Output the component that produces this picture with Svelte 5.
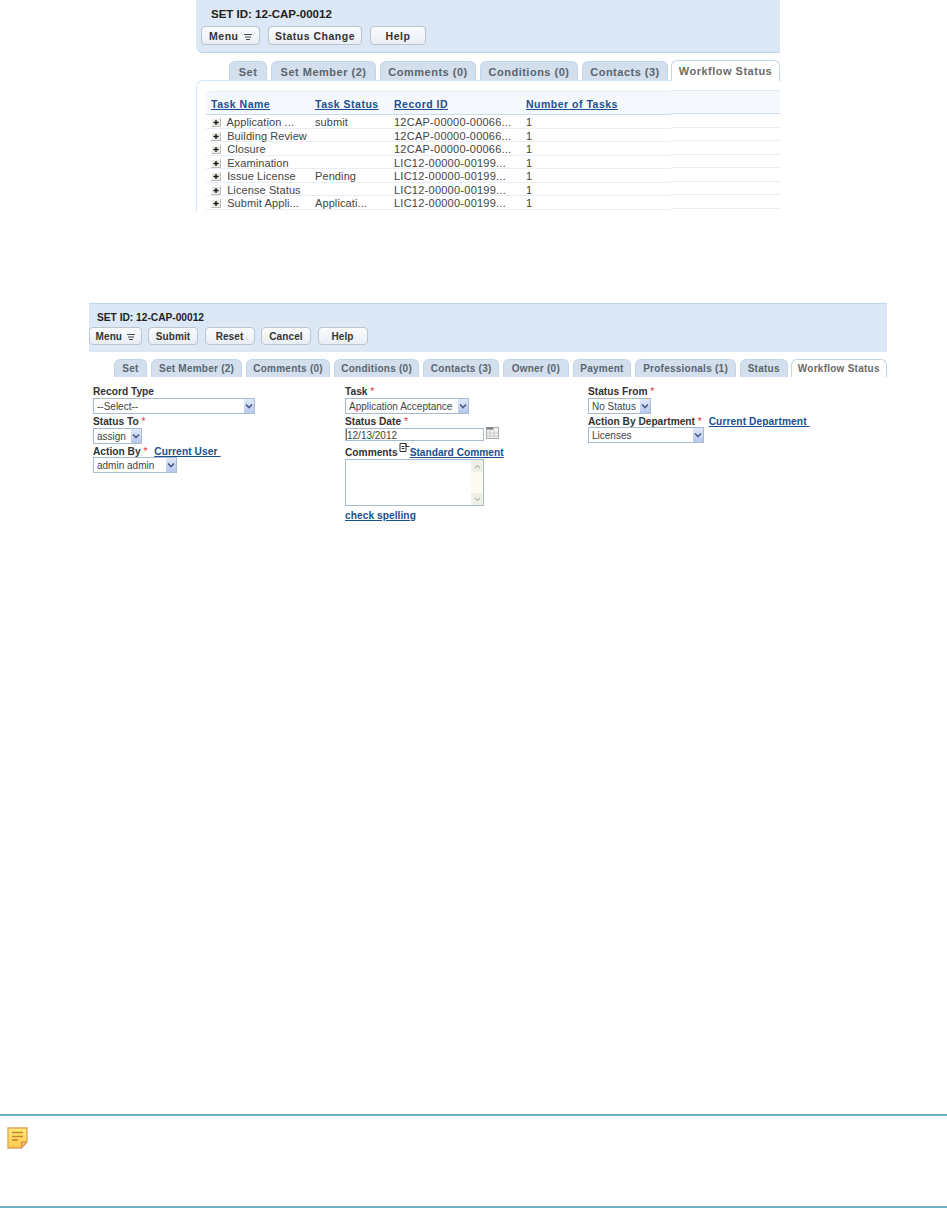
<script>
  const topTabs = [['Set', 38], ['Set Member (2)', 105], ['Comments (0)', 96], ['Conditions (0)', 98], ['Contacts (3)', 86]];
  const formTabs = [['Set', 33], ['Set Member (2)', 92], ['Comments (0)', 84], ['Conditions (0)', 86], ['Contacts (3)', 76], ['Owner (0)', 66], ['Payment', 59], ['Professionals (1)', 101], ['Status', 48]];

  const tasks = [
    { name: 'Application ...', status: 'submit', record: '12CAP-00000-00066...' },
    { name: 'Building Review', status: '', record: '12CAP-00000-00066...' },
    { name: 'Closure', status: '', record: '12CAP-00000-00066...' },
    { name: 'Examination', status: '', record: 'LIC12-00000-00199...' },
    { name: 'Issue License', status: 'Pending', record: 'LIC12-00000-00199...' },
    { name: 'License Status', status: '', record: 'LIC12-00000-00199...' },
    { name: 'Submit Appli...', status: 'Applicati...', record: 'LIC12-00000-00199...' }
  ];
</script>

{#snippet arrow()}
  <span class="arrow">
    <svg width="8" height="6" viewBox="0 0 8 6"><path d="M1 1.5 L4 4.5 L7 1.5" fill="none" stroke="#4a5a85" stroke-width="1.6" /></svg>
  </span>
{/snippet}

{#snippet menuLines()}
  <svg class="lines" width="8" height="6" viewBox="0 0 8 6"><path d="M0 .5h8M1 3h6M2 5.5h4" stroke="#444" /></svg>
{/snippet}

<div class="page">
  <section class="top">
    <div class="head">
      <div class="set-id">SET ID: 12-CAP-00012</div>
      <div class="btns">
        <button class="btn menu">Menu {@render menuLines()}</button>
        <button class="btn change">Status Change</button>
        <button class="btn help">Help</button>
      </div>
    </div>

    <div class="tabs top-tabs">
      {#each topTabs as [label, w]}
        <span class="tab" style="width:{w}px">{label}</span>
      {/each}
      <span class="tab on" style="width:109px">Workflow Status</span>
    </div>

    <div class="panel">
      <div class="tbl">
        <div class="grid-head">
          <a href="#a" class="c1">Task Name</a>
          <a href="#a" class="c2">Task Status</a>
          <a href="#a" class="c3">Record ID</a>
          <a href="#a" class="c4">Number of Tasks</a>
        </div>
        {#each tasks as task}
          <div class="row">
            <span class="c1">
              <span class="plus"><svg width="10" height="9" viewBox="0 0 10 9"><path d="M5 2v5M2.5 4.5h5" stroke="#111" stroke-width="1.3" /></svg></span>
              {task.name}
            </span>
            <span class="c2">{task.status}</span>
            <span class="c3">{task.record}</span>
            <span class="c4">1</span>
          </div>
        {/each}
      </div>
      <div class="filler">
        <div class="grid-head"></div>
        {#each tasks as task}
          <div class="row"></div>
        {/each}
      </div>
    </div>
  </section>

  <section class="form-shot">
    <div class="head form-head">
      <div class="set-id">SET ID: 12-CAP-00012</div>
      <div class="btns">
        <button class="btn menu">Menu {@render menuLines()}</button>
        <button class="btn b-sub">Submit</button>
        <button class="btn b-sub">Reset</button>
        <button class="btn b-sub">Cancel</button>
        <button class="btn b-sub">Help</button>
      </div>
    </div>

    <div class="tabs form-tabs">
      {#each formTabs as [label, w]}
        <span class="tab" style="width:{w}px">{label}</span>
      {/each}
      <span class="tab on" style="width:97px">Workflow Status</span>
    </div>

    <div class="form">
      <div class="col col1">
        <label for="x">Record Type</label>
        <div class="select" style="width:162px"><span>--Select--</span>{@render arrow()}</div>
        <label for="x">Status To <i>*</i></label>
        <div class="select" style="width:49px"><span>assign</span>{@render arrow()}</div>
        <label class="tight" for="x">Action By <i>*</i> <a href="#a" class="lnk">Current User&nbsp;</a></label>
        <div class="select" style="width:84px"><span>admin admin</span>{@render arrow()}</div>
      </div>
      <div class="col col2">
        <label for="x">Task <i>*</i></label>
        <div class="select" style="width:124px"><span>Application Acceptance</span>{@render arrow()}</div>
        <label for="x">Status Date <i>*</i></label>
        <div class="date-line">
          <div class="input">12/13/2012</div>
          <svg class="cal" width="13" height="12" viewBox="0 0 13 12"><rect x=".5" y=".5" width="12" height="11" fill="#f1f1f1" stroke="#aaa" /><rect x=".5" y=".5" width="7" height="2" fill="#777" /><path d="M1 6h11M1 9h11M4 3v8M8 3v8" stroke="#ccc" /></svg>
        </div>
        <div class="comment-label">
          <label for="x">Comments</label>
          <svg class="doc" width="11" height="11" viewBox="0 0 11 11"><path d="M1 .5h6v3h3.5M7 .5v8M1 .5v8h6" fill="none" stroke="#333" /><path d="M2.5 3.5h3M2.5 5.5h3" stroke="#333" /></svg>
          <a href="#a" class="lnk std">Standard Comment</a>
        </div>
        <div class="textarea">
          <div class="scroll">
            <span class="sb">
              <svg width="7" height="5" viewBox="0 0 7 5"><path d="M1 4 L3.5 1.5 L6 4" fill="none" stroke="#bbb" stroke-width="1.2" /></svg>
            </span>
            <span class="sb">
              <svg width="7" height="5" viewBox="0 0 7 5"><path d="M1 1 L3.5 3.5 L6 1" fill="none" stroke="#bbb" stroke-width="1.2" /></svg>
            </span>
          </div>
        </div>
        <a href="#a" class="lnk spell">check spelling</a>
      </div>
      <div class="col col3">
        <label for="x">Status From <i>*</i></label>
        <div class="select" style="width:63px"><span>No Status</span>{@render arrow()}</div>
        <label class="tight" for="x">Action By Department <i>*</i> <a href="#a" class="lnk dept">Current Department&nbsp;</a></label>
        <div class="select" style="width:116px"><span>Licenses</span>{@render arrow()}</div>
      </div>
    </div>
  </section>

  <section class="note">
    <svg width="21" height="22" viewBox="0 0 21 22">
      <defs>
        <linearGradient id="noteFill" x1="0" y1="0" x2="0" y2="1">
          <stop offset="0" stop-color="#ffee70" />
          <stop offset="1" stop-color="#ffc84e" />
        </linearGradient>
      </defs>
      <path d="M1 1h19v14l-5.5 6H1z" fill="url(#noteFill)" stroke="#e0a465" stroke-width="1.4" />
      <path d="M14.5 20.5v-5.5h5z" fill="#f4c27c" stroke="#cf8b45" />
      <path d="M5 5.5h11M5 9.5h11" stroke="#c98233" stroke-width="1.6" />
      <path d="M5 13h6" stroke="#bd5f22" stroke-width="1.2" />
    </svg>
  </section>
</div>

<style>
  :global(body) { margin: 0; background: #fff; }
  .page {
    width: 947px; height: 1208px; overflow: hidden;
    font-family: "Liberation Sans", Arial, sans-serif; font-size: 10.5px; color: #222;
  }

  .top { margin-left: 196px; width: 584px; }
  .head {
    height: 53px; box-sizing: border-box; background: #dce8f5;
    border-bottom: 1px solid #c2d6ea; border-bottom-left-radius: 7px;
    padding: 7px 0 0 15px;
  }
  .set-id { font-size: 11.5px; font-weight: bold; line-height: 14px; color: #222; }
  .btns { display: flex; gap: 8px; margin: 5px 0 0 -10px; }
  .btn {
    height: 19px; padding: 0; box-sizing: border-box; background: linear-gradient(#fafcfe, #e8eef5);
    border: 1px solid #bcc4cc; border-radius: 4px;
    font: bold 10.5px "Liberation Sans", Arial, sans-serif; letter-spacing: .5px; color: #333;
  }
  .btn.menu { width: 59px; }
  .btn.change { width: 94px; }
  .btn.help { width: 56px; }
  .btn.b-sub { width: 50px; }
  .lines { margin-left: 2px; }

  .tabs { display: flex; gap: 4px; }
  .tab {
    height: 19px; box-sizing: border-box; text-align: center; line-height: 20px;
    background: #d3dfec; border: 1px solid #c2d6ea; border-bottom: 0;
    border-radius: 6px 6px 0 0; white-space: nowrap;
    font-size: 11px; font-weight: bold; letter-spacing: .5px; color: #5a6570;
  }
  .tab.on { background: #fff; height: 21px; margin: -1px 0 -1px -1px; color: #6b6b6b; position: relative; }
  .top-tabs { margin: 8px 0 0 33px; }

  .panel {
    display: flex; height: 132px; box-sizing: border-box;
    padding: 10px 0 0 9px;
    border-top: 1px solid #d5e6f5; border-left: 1px solid #d5e6f5; border-top-left-radius: 7px;
  }
  .tbl { width: 465px; }
  .filler { flex: 1; margin-top: -1px; }
  .grid-head, .row { display: flex; }
  .grid-head {
    height: 24px; align-items: center; box-sizing: border-box; padding-top: 2px;
    background: #f5f9fd; border-top: 1px solid #e1ecf6; border-bottom: 1px solid #c9dcee;
  }
  .tbl .grid-head { border-top-left-radius: 6px; }
  .grid-head a {
    font-weight: bold; color: #1b4f8f; text-decoration: underline; letter-spacing: .5px; font-size: 10.5px;
  }
  .row { height: 13.5px; line-height: 14px; box-sizing: border-box; border-bottom: 1px solid #e8eef4; color: #444; font-size: 11px; letter-spacing: .1px; }
  .c1 { width: 104px; padding-left: 5px; white-space: nowrap; display: block; }
  .c2 { width: 79px; }
  .c3 { width: 132px; }
  .row .c3 { letter-spacing: .25px; }
  .c4 { flex: 1; }
  .plus {
    display: inline-block; width: 10px; height: 9px; margin-right: 3px; vertical-align: -1px;
    background: #eceae2; box-shadow: inset -1px -1px #bbb, inset 1px 1px #fff;
  }
  .plus svg { display: block; }

  .form-shot { margin: 91px 0 0 89px; width: 798px; height: 228px; }
  .form-head { height: 49px; padding: 7px 0 0 8px; border-bottom: 0; border-top: 1px solid #c2d6ea; border-radius: 0; }
  .form-head .set-id { font-size: 10.2px; }
  .form-head .btns { gap: 6.5px; margin: 2px 0 0 -8px; }
  .form-head .btn { height: 18px; font-size: 10px; letter-spacing: .1px; }
  .form-head .btn.menu { width: 52.5px; }
  .form-tabs { margin: 7px 0 0 25px; gap: 4px; }
  .form-tabs .tab { height: 18px; line-height: 18px; font-size: 10px; letter-spacing: .25px; }
  .form-tabs .tab.on { height: 18px; margin: 0 0 0 -1px; }

  .form { display: flex; padding: 7px 0 0 4px; }
  .col { display: flex; flex-direction: column; align-items: flex-start; }
  .col1 { width: 252px; }
  .col2 { width: 243px; }
  label { display: block; height: 14px; font-size: 10.2px; font-weight: bold; line-height: 16px; color: #333; white-space: nowrap; }
  label.tight { margin-bottom: -1px; }
  label i { font-style: normal; color: #d33; font-weight: normal; }
  .select {
    height: 16px; box-sizing: border-box; display: flex; align-items: center; justify-content: space-between;
    border: 1px solid #a9bccf; background: #fff; padding-left: 3px; color: #444; font-size: 10px; line-height: 14px; white-space: nowrap;
  }
  .select span:first-child { padding-top: 1px; }
  .arrow {
    width: 10px; height: 14px; flex-shrink: 0; display: flex; align-items: center; justify-content: center;
    background: linear-gradient(#dfe8fa, #b7c8ee);
  }
  .lnk { color: #1b4f8f; font-weight: bold; text-decoration: underline; letter-spacing: .1px; }
  label .lnk { margin-left: 4px; }
  .lnk.std { font-size: 10.2px; letter-spacing: 0; }
  .date-line { display: flex; align-items: flex-start; gap: 2px; }
  .input {
    width: 139px; height: 13px; line-height: 13px; box-sizing: border-box; font-size: 10px;
    border: 1px solid #a9bccf; padding-left: 1px; color: #444; box-shadow: inset 1px 0 #777;
  }
  .cal { margin-top: -1px; }
  .comment-label { display: flex; align-items: center; height: 14px; margin-top: 4px; }
  .doc { margin: -7px 0 0 1px; }
  .textarea {
    width: 139px; height: 47px; box-sizing: border-box; border: 1px solid #a9bccf; display: flex; justify-content: flex-end;
  }
  .scroll { width: 12px; background: #fbfbf2; display: flex; flex-direction: column; justify-content: space-between; }
  .sb { height: 12px; display: flex; align-items: center; justify-content: center; background: #efefe6; }
  .spell { margin-top: 4px; letter-spacing: .05px; font-size: 10.2px; }

  .note {
    margin-top: 583px; height: 94px; box-sizing: border-box; padding: 11px 0 0 7px;
    border-top: 2px solid #74b0c4; border-bottom: 2px solid #74b0c4;
  }
  .note svg { display: block; }
</style>
